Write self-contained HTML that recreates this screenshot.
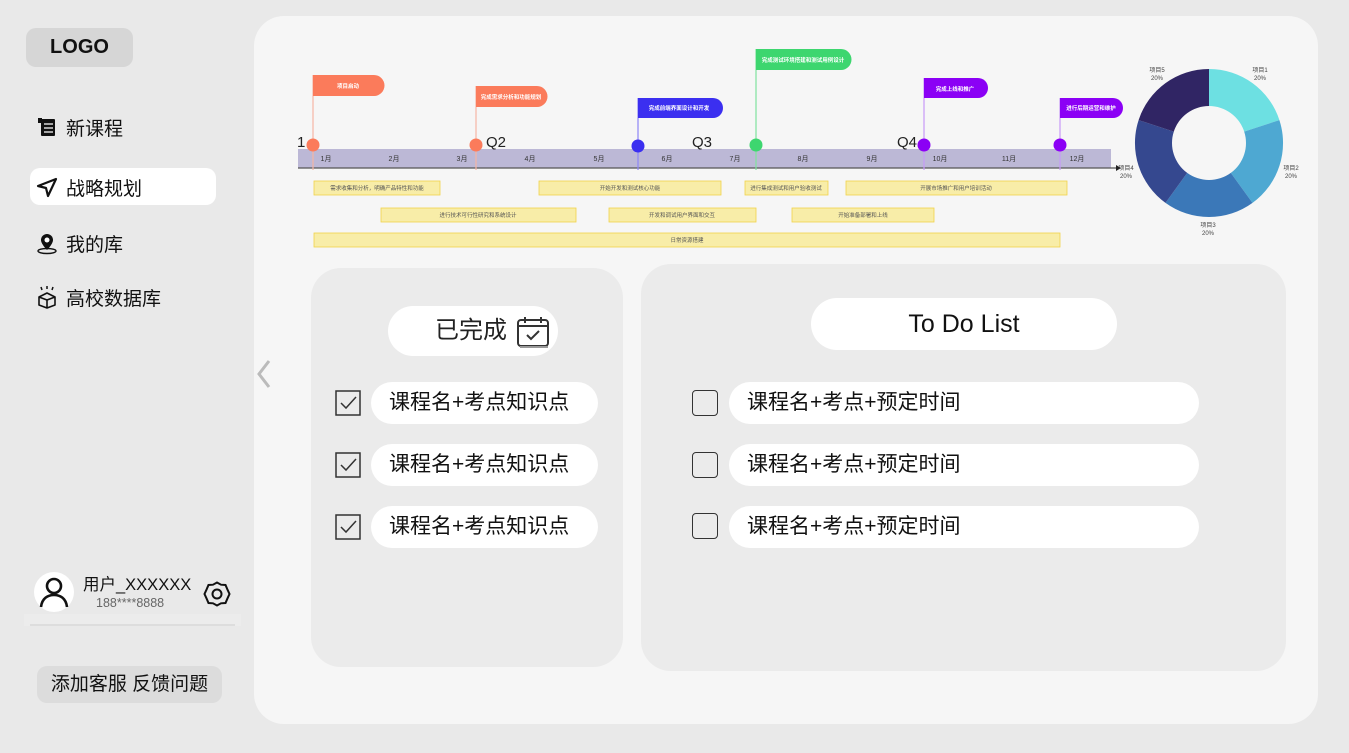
<!DOCTYPE html>
<html><head><meta charset="utf-8"><style>
*{margin:0;padding:0;box-sizing:border-box}
body{width:1349px;height:753px;background:#e9e9e9;position:relative;overflow:hidden;font-family:"Liberation Sans","Noto Sans CJK SC",sans-serif;color:#111}
.a{position:absolute}
.main{left:254px;top:16px;width:1064px;height:708px;background:#f6f6f6;border-radius:30px}
.logo{left:26px;top:28px;width:107px;height:39px;background:#d6d6d6;border-radius:10px;font-weight:bold;font-size:20px;text-align:center;line-height:39px}
.nav{left:36px;font-size:19px;display:flex;align-items:center;gap:8px;height:30px}
.card{background:#ebebeb;border-radius:30px}
.pill{background:#fff;border-radius:21px;font-size:21px;line-height:42px;padding-left:18px}
.cb{width:26px;height:26px;border:1.6px solid #333;border-radius:4px}
</style></head><body>
<div class="a main"></div>
<div class="a logo">LOGO</div>
<div class="a" style="left:30px;top:168px;width:186px;height:37px;background:#fff;border-radius:10px"></div>
<div class="a nav" style="top:112px"><svg width="22" height="22" viewBox="0 0 22 22"><rect x="2" y="2" width="4" height="5" fill="#111"/><rect x="5" y="3" width="14" height="17" rx="1" fill="#111"/><path d="M8 8h9M8 12h9M8 16h9" stroke="#fff" stroke-width="1.3"/></svg>新课程</div>
<div class="a nav" style="top:172px"><svg width="22" height="22" viewBox="0 0 22 22"><path d="M20 3L2 10l8 2 2 8z" fill="none" stroke="#111" stroke-width="2.2" stroke-linejoin="round"/></svg>战略规划</div>
<div class="a nav" style="top:228px"><svg width="22" height="24" viewBox="0 0 22 24"><path d="M11 3a6 6 0 0 1 6 6c0 4-6 10-6 10S5 13 5 9a6 6 0 0 1 6-6z" fill="#111"/><circle cx="11" cy="9" r="2.5" fill="#fff"/><ellipse cx="11" cy="20" rx="9" ry="2.5" fill="none" stroke="#111" stroke-width="1.4"/></svg>我的库</div>
<div class="a nav" style="top:282px"><svg width="22" height="24" viewBox="0 0 22 24"><path d="M11 8l8 4v8l-8 3-8-3v-8z M3 12l8 3 8-3 M11 15v8" fill="none" stroke="#111" stroke-width="1.6" stroke-linejoin="round"/><path d="M5 2l1 3M11 1v3M17 2l-1 3" stroke="#111" stroke-width="1.5"/></svg>高校数据库</div>
<svg class="a" style="left:254px;top:358px" width="20" height="32"><path d="M15 3L5 16l10 13" stroke="#bbb" stroke-width="3" fill="none"/></svg>
<div class="a" style="left:24px;top:614px;width:217px;height:12px;background:#ececec"></div>
<div class="a" style="left:30px;top:624px;width:205px;height:2px;background:#ddd"></div>
<div class="a" style="left:34px;top:572px;width:40px;height:40px;border-radius:50%;background:#fff"></div>
<svg class="a" style="left:34px;top:572px" width="40" height="40"><circle cx="20" cy="14" r="7" fill="none" stroke="#111" stroke-width="2.6"/><path d="M7 35c1-9 7-12 13-12s12 3 13 12" fill="none" stroke="#111" stroke-width="2.6"/></svg>
<div class="a" style="left:83px;top:575px;font-size:16.5px;line-height:20px;white-space:nowrap">用户_XXXXXX</div>
<div class="a" style="left:96px;top:596px;font-size:12.5px;line-height:14px;color:#666">188****8888</div>
<svg class="a" style="left:203px;top:580px" width="28" height="28" viewBox="0 0 28 28"><path d="M14 2.5l4 2.2 4.5.3 1.8 4.2 2.2 4.8-2.2 4.8-1.8 4.2-4.5.3-4 2.2-4-2.2-4.5-.3-1.8-4.2L1.5 14l2.2-4.8 1.8-4.2 4.5-.3z" fill="none" stroke="#111" stroke-width="2"/><circle cx="14" cy="14" r="4.5" fill="none" stroke="#111" stroke-width="2"/></svg>
<div class="a" style="left:37px;top:666px;width:185px;height:37px;background:#dcdcdc;border-radius:10px;font-size:19px;text-align:center;line-height:37px">添加客服 反馈问题</div>

<svg class="a" style="left:0;top:0" width="1349" height="260" font-family="Liberation Sans,Noto Sans CJK SC,sans-serif">
<rect x="298" y="149" width="813" height="19" fill="#bcb8d6"/>
<line x1="298" y1="168" x2="1118" y2="168" stroke="#555" stroke-width="1.2"/>
<path d="M1116 165l5 3-5 3z" fill="#222"/>
<g font-size="7" fill="#333" text-anchor="middle">
<text x="326" y="161">1月</text><text x="394" y="161">2月</text><text x="462" y="161">3月</text><text x="530" y="161">4月</text><text x="599" y="161">5月</text><text x="667" y="161">6月</text><text x="735" y="161">7月</text><text x="803" y="161">8月</text><text x="872" y="161">9月</text><text x="940" y="161">10月</text><text x="1009" y="161">11月</text><text x="1077" y="161">12月</text></g>
<g font-size="15" fill="#222"><text x="297" y="147">1</text><text x="486" y="147">Q2</text><text x="692" y="147">Q3</text><text x="897" y="147">Q4</text></g>
<g stroke-width="1.2">
<line x1="313" y1="75" x2="313" y2="170" stroke="#f6b6a5"/><line x1="476" y1="86" x2="476" y2="170" stroke="#f6b6a5"/><line x1="638" y1="98" x2="638" y2="170" stroke="#8d86f7"/><line x1="756" y1="49" x2="756" y2="170" stroke="#7fe29e"/><line x1="924" y1="78" x2="924" y2="170" stroke="#c79af8"/><line x1="1060" y1="98" x2="1060" y2="170" stroke="#c79af8"/></g>
<path d="M313 75h61a10.5 10.5 0 0 1 0 21h-61z" fill="#fb7b5b"/>
<path d="M476 86h61a10.5 10.5 0 0 1 0 21h-61z" fill="#fb7b5b"/>
<path d="M638 98h75a10 10 0 0 1 0 20h-75z" fill="#3b2ff0"/>
<path d="M756 49h85a10.5 10.5 0 0 1 0 21h-85z" fill="#3dd66f"/>
<path d="M924 78h54a10 10 0 0 1 0 20h-54z" fill="#8b00f5"/>
<path d="M1060 98h53a10 10 0 0 1 0 20h-53z" fill="#8b00f5"/>
<g font-size="5.5" fill="#fff" font-weight="bold" text-anchor="middle">
<text x="348" y="88">项目启动</text><text x="511" y="99">完成需求分析和功能规划</text><text x="679" y="110">完成前端界面设计和开发</text><text x="803" y="62">完成测试环境搭建和测试用例设计</text><text x="955" y="91">完成上线和推广</text><text x="1091" y="110">进行后期运营和维护</text></g>
<circle cx="313" cy="145" r="6.5" fill="#fb7b5b"/><circle cx="476" cy="145" r="6.5" fill="#fb7b5b"/><circle cx="638" cy="146" r="6.5" fill="#3b2ff0"/><circle cx="756" cy="145" r="6.5" fill="#3dd66f"/><circle cx="924" cy="145" r="6.5" fill="#8b00f5"/><circle cx="1060" cy="145" r="6.5" fill="#8b00f5"/>
<g fill="#f8eda8" stroke="#f1d34a" stroke-width="0.8">
<rect x="314" y="181" width="126" height="14"/><rect x="539" y="181" width="182" height="14"/><rect x="745" y="181" width="83" height="14"/><rect x="846" y="181" width="221" height="14"/>
<rect x="381" y="208" width="195" height="14"/><rect x="609" y="208" width="147" height="14"/><rect x="792" y="208" width="142" height="14"/>
<rect x="314" y="233" width="746" height="14"/></g>
<g font-size="5.5" fill="#555" text-anchor="middle">
<text x="377" y="190">需求收集和分析，明确产品特性和功能</text><text x="630" y="190">开始开发和测试核心功能</text><text x="786" y="190">进行集成测试和用户验收测试</text><text x="956" y="190">开展市场推广和用户培训活动</text>
<text x="478" y="217">进行技术可行性研究和系统设计</text><text x="682" y="217">开发和调试用户界面和交互</text><text x="863" y="217">开始准备部署和上线</text><text x="687" y="242">日常资源搭建</text></g>
<path d="M1209 69A74 74 0 0 1 1279.4 120.1L1244.2 131.6A37 37 0 0 0 1209 106z" fill="#6de0e2"/>
<path d="M1279.4 120.1A74 74 0 0 1 1252.5 202.9L1230.8 172.9A37 37 0 0 0 1244.2 131.6z" fill="#4ea8d2"/>
<path d="M1252.5 202.9A74 74 0 0 1 1165.5 202.9L1187.2 172.9A37 37 0 0 0 1230.8 172.9z" fill="#3b78b8"/>
<path d="M1165.5 202.9A74 74 0 0 1 1138.6 120.1L1173.8 131.6A37 37 0 0 0 1187.2 172.9z" fill="#35488f"/>
<path d="M1138.6 120.1A74 74 0 0 1 1209 69L1209 106A37 37 0 0 0 1173.8 131.6z" fill="#302564"/>
<g font-size="6" fill="#444" text-anchor="middle">
<text x="1260" y="72">项目1</text><text x="1260" y="80">20%</text>
<text x="1291" y="170">项目2</text><text x="1291" y="178">20%</text>
<text x="1208" y="227">项目3</text><text x="1208" y="235">20%</text>
<text x="1126" y="170">项目4</text><text x="1126" y="178">20%</text>
<text x="1157" y="72">项目5</text><text x="1157" y="80">20%</text></g>
</svg>

<div class="a card" style="left:311px;top:268px;width:312px;height:399px"></div>
<div class="a" style="left:388px;top:306px;width:170px;height:50px;background:#fff;border-radius:25px;font-size:24px;line-height:50px;padding-left:47px;color:#222">已完成</div>
<svg class="a" style="left:516px;top:315px" width="34" height="33" viewBox="0 0 34 33"><rect x="2" y="5" width="30" height="26" rx="3" fill="none" stroke="#333" stroke-width="2"/><path d="M2 11h30M9 2v6M25 2v6" stroke="#333" stroke-width="2"/><path d="M11 20l4 4 8-8" stroke="#333" stroke-width="2" fill="none"/><path d="M4 32h28" stroke="#999" stroke-width="2"/></svg>
<div class="a pill" style="left:371px;top:382px;width:227px">课程名+考点知识点</div>
<div class="a pill" style="left:371px;top:444px;width:227px">课程名+考点知识点</div>
<div class="a pill" style="left:371px;top:506px;width:227px">课程名+考点知识点</div>
<svg class="a" style="left:335px;top:390px" width="27" height="150"><g fill="none" stroke="#333" stroke-width="1.5"><rect x="1" y="1" width="24" height="24"/><path d="M6 13l5 5 10-11"/><rect x="1" y="63" width="24" height="24"/><path d="M6 75l5 5 10-11"/><rect x="1" y="125" width="24" height="24"/><path d="M6 137l5 5 10-11"/></g></svg>

<div class="a card" style="left:641px;top:264px;width:645px;height:407px"></div>
<div class="a" style="left:811px;top:298px;width:306px;height:52px;background:#fff;border-radius:26px;font-size:25px;line-height:52px;text-align:center">To Do List</div>
<div class="a pill" style="left:729px;top:382px;width:470px">课程名+考点+预定时间</div>
<div class="a pill" style="left:729px;top:444px;width:470px">课程名+考点+预定时间</div>
<div class="a pill" style="left:729px;top:506px;width:470px">课程名+考点+预定时间</div>
<div class="a cb" style="left:692px;top:390px"></div>
<div class="a cb" style="left:692px;top:452px"></div>
<div class="a cb" style="left:692px;top:513px"></div>
</body></html>
